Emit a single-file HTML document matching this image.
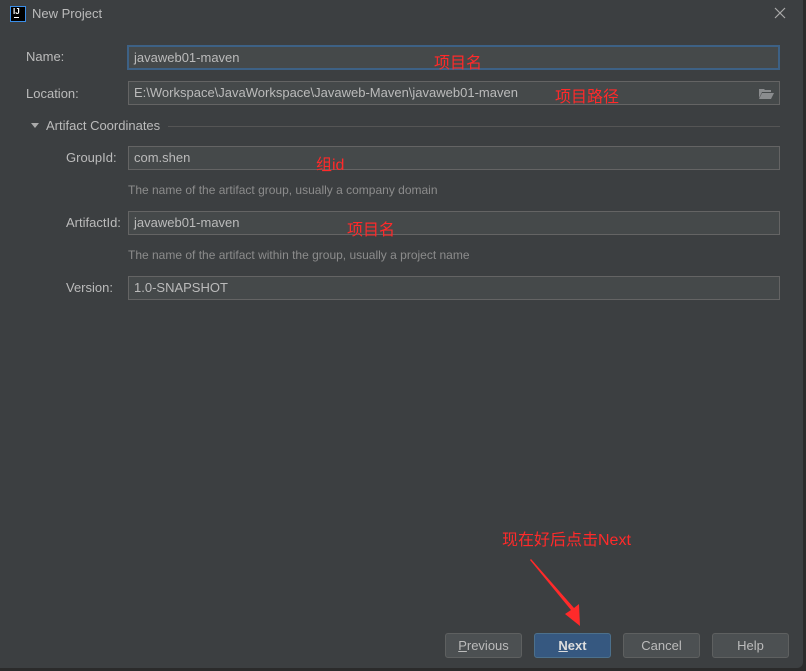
<!DOCTYPE html><html><head><style>
body{margin:0;width:806px;height:671px;background:#2b2b2b;overflow:hidden;font-family:"Liberation Sans","Noto Sans CJK SC",sans-serif;font-size:13px;color:#bbbbbb}
.win{position:absolute;left:0;top:0;width:803px;height:668px;background:#3c3f41;border-radius:0 0 6px 0}
.abs{position:absolute}
.f{position:absolute;left:128px;height:22px;background:#45494a;border:1px solid #646464;line-height:22px;padding-left:5px;box-sizing:content-box;width:645px}
.lbl{position:absolute;line-height:16px}
.red{position:absolute;color:#ff2a2a;font-size:16px}
.hint{position:absolute;left:128px;color:#8c8c8c;font-size:12px}
.btn{position:absolute;top:633px;width:75px;height:23px;border:1px solid #5e6060;background:#4c5052;border-radius:3px;text-align:center;line-height:23px;color:#bbb}
</style></head><body><div class="win">
<div class="abs" style="left:10px;top:6px;width:14px;height:14px;background:#000;border:1px solid #3b8ee8"><div class="abs" style="left:2px;top:0px;color:#fff;font-size:8px;font-weight:bold">IJ</div><div class="abs" style="left:3px;top:10px;width:5px;height:1px;background:#fff"></div></div>
<div class="abs" style="left:32px;top:6px;font-size:13px;color:#bbb">New Project</div>
<svg class="abs" style="left:774px;top:7px" width="12" height="12"><path d="M1 1L11 11M11 1L1 11" stroke="#aaa" stroke-width="1.2"/></svg>
<div class="lbl" style="left:26px;top:49px">Name:</div>
<div class="f" style="top:45px;border:2px solid #3d6185;left:127px;height:21px;line-height:21px;width:644px">javaweb01-maven</div>
<div class="red" style="left:434px;top:49px">项目名</div>
<div class="lbl" style="left:26px;top:86px">Location:</div>
<div class="f" style="top:81px">E:\Workspace\JavaWorkspace\Javaweb-Maven\javaweb01-maven</div>
<svg class="abs" style="left:759px;top:88px" width="15" height="11"><path d="M0 1h5l1 1h6v2H3L0 10z" fill="#8a8c8e"/><path d="M3 5h12l-3 6H0z" fill="#8a8c8e"/></svg>
<div class="red" style="left:555px;top:83px">项目路径</div>
<svg class="abs" style="left:31px;top:123px" width="8" height="6"><path d="M0 0h8L4 5z" fill="#aaa"/></svg>
<div class="lbl" style="left:46px;top:118px">Artifact Coordinates</div>
<div class="abs" style="left:168px;top:126px;width:612px;height:1px;background:#555"></div>
<div class="lbl" style="left:66px;top:150px">GroupId:</div>
<div class="f" style="top:146px">com.shen</div>
<div class="red" style="left:316px;top:151px">组id</div>
<div class="hint" style="top:183px">The name of the artifact group, usually a company domain</div>
<div class="lbl" style="left:66px;top:215px">ArtifactId:</div>
<div class="f" style="top:211px">javaweb01-maven</div>
<div class="red" style="left:347px;top:216px">项目名</div>
<div class="hint" style="top:248px">The name of the artifact within the group, usually a project name</div>
<div class="lbl" style="left:66px;top:280px">Version:</div>
<div class="f" style="top:276px">1.0-SNAPSHOT</div>
<div class="red" style="left:502px;top:526px">现在好后点击Next</div>
<svg class="abs" style="left:525px;top:558px" width="60" height="72"><path d="M5 2L46 52L40 56L55 68L54 46L49 50L6 1Z" fill="#ff2a2a"/></svg>
<div class="btn" style="left:445px"><u>P</u>revious</div>
<div class="btn" style="left:534px;background:#365880;border-color:#4c708c;font-weight:bold;color:#ddd"><u>N</u>ext</div>
<div class="btn" style="left:623px">Cancel</div>
<div class="btn" style="left:712px">Help</div>
</div></body></html>
